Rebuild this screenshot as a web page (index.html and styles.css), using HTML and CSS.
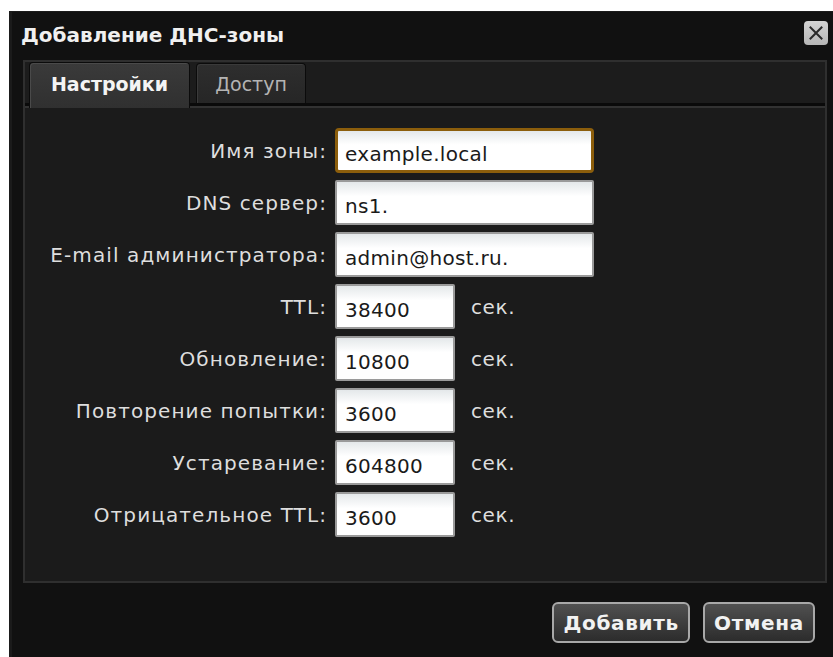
FILE: index.html
```html
<!DOCTYPE html>
<html lang="ru">
<head>
<meta charset="utf-8">
<title>Добавление ДНС-зоны</title>
<link rel="stylesheet" href="styles.css">
</head>
<body>
<div class="dialog">
  <div class="titlebar">
    <span class="title">Добавление ДНС-зоны</span>
    <button class="close" type="button" aria-label="Закрыть">
      <svg width="14" height="14" viewBox="0 0 14 14"><path d="M1.5 1.5 L12.5 12.5 M12.5 1.5 L1.5 12.5" stroke="#2a2a2a" stroke-width="2" fill="none" stroke-linecap="square"/></svg>
    </button>
  </div>
  <div class="panel">
    <div class="tabs">
      <div class="tab active">Настройки</div>
      <div class="tab">Доступ</div>
    </div>
    <div class="content">
      <form class="form">
        <label class="lbl">Имя зоны:</label>
        <div class="field"><input class="inp wide focus" value="example.local"></div>
        <label class="lbl">DNS сервер:</label>
        <div class="field"><input class="inp wide" value="ns1."></div>
        <label class="lbl">E-mail администратора:</label>
        <div class="field"><input class="inp wide" value="admin@host.ru."></div>
        <label class="lbl">TTL:</label>
        <div class="field"><input class="inp short" value="38400"><span class="unit">сек.</span></div>
        <label class="lbl">Обновление:</label>
        <div class="field"><input class="inp short" value="10800"><span class="unit">сек.</span></div>
        <label class="lbl">Повторение попытки:</label>
        <div class="field"><input class="inp short" value="3600"><span class="unit">сек.</span></div>
        <label class="lbl">Устаревание:</label>
        <div class="field"><input class="inp short" value="604800"><span class="unit">сек.</span></div>
        <label class="lbl">Отрицательное TTL:</label>
        <div class="field"><input class="inp short" value="3600"><span class="unit">сек.</span></div>
      </form>
    </div>
  </div>
  <div class="footer">
    <button class="btn" type="button">Добавить</button>
    <button class="btn" type="button">Отмена</button>
  </div>
</div>
</body>
</html>
```
FILE: styles.css
```css
html, body {
  margin: 0;
  padding: 0;
  background: #ffffff;
}

body {
  font-family: "DejaVu Sans", sans-serif;
  overflow: hidden;
}

.dialog {
  box-sizing: border-box;
  margin: 11px 0 0 9px;
  width: 824px;
  height: 646px;
  background: #111111;
  border-left: 3px solid #1b1b1b;
  border-top: 1px solid #1b1b1b;
  display: flex;
  flex-direction: column;
}

.titlebar {
  height: 48px;
  display: flex;
  align-items: flex-start;
  justify-content: space-between;
  padding: 0 5px 0 9px;
  box-sizing: border-box;
}

.title {
  color: #f0f0f0;
  font-weight: bold;
  font-size: 20px;
  line-height: 24px;
  margin-top: 11px;
}

.close {
  margin-top: 9px;
  width: 24px;
  height: 24px;
  padding: 0;
  border: none;
  border-radius: 4px;
  background: linear-gradient(#d4d4d4, #b6b6b6);
  display: flex;
  align-items: center;
  justify-content: center;
}

.panel {
  margin: 0 6px 0 11px;
  height: 523px;
  box-sizing: border-box;
  border: 2px solid #2f2f2f;
  background: #1b1b1b;
  display: flex;
  flex-direction: column;
}

.tabs {
  height: 46px;
  box-sizing: border-box;
  background: #1c1c1c;
  border-bottom: 2px solid #323232;
  box-shadow: inset 0 -3px 0 #0a0a0a;
  display: flex;
  align-items: flex-end;
  gap: 6px;
  padding: 0 0 0 4px;
  margin-bottom: -2px;
}

.tab {
  box-sizing: border-box;
  height: 40px;
  margin-bottom: 3px;
  display: flex;
  align-items: center;
  justify-content: center;
  font-size: 19px;
  color: #b4b4b4;
  background: linear-gradient(#2e2e2e, #262626);
  border: 1px solid #0b0b0b;
  border-bottom: none;
  border-radius: 4px 4px 0 0;
  box-shadow: inset 1px 1px 0 #3a3a3a;
  width: 110px;
}

.tab.active {
  height: 46px;
  margin-bottom: -2px;
  padding-bottom: 4px;
  width: 161px;
  color: #f4f4f4;
  font-weight: bold;
  font-size: 19px;
  background: linear-gradient(#3a3a3a, #303030);
  box-shadow: inset 1px 1px 0 #4a4a4a;
}

.content {
  flex: 1;
  padding-top: 22px;
}

.form {
  display: grid;
  grid-template-columns: 302px 1fr;
  column-gap: 8px;
  row-gap: 7px;
  margin: 0;
}

.lbl {
  justify-self: end;
  align-self: center;
  color: #dedede;
  font-size: 20px;
  letter-spacing: 1.1px;
  white-space: nowrap;
}

.field {
  display: flex;
  align-items: center;
  gap: 16px;
}

.inp {
  box-sizing: border-box;
  height: 45px;
  border: 2px solid #9a9a9a;
  border-radius: 2px;
  background: linear-gradient(#e4e8ea, #ffffff 35%);
  font-family: "DejaVu Sans", sans-serif;
  font-size: 20px;
  letter-spacing: 0.3px;
  color: #1a1a1a;
  padding: 6px 8px 0 8px;
  outline: none;
}

.inp.wide {
  width: 259px;
}

.inp.short {
  width: 120px;
}

.inp.focus {
  border: 3px solid #8c5e0c;
  border-radius: 4px;
  padding-left: 7px;
}

.unit {
  color: #dedede;
  font-size: 20px;
  letter-spacing: 0.6px;
}

.footer {
  flex: 1;
  display: flex;
  justify-content: flex-end;
  align-items: flex-start;
  gap: 13px;
  padding: 19px 18px 0 0;
}

.btn {
  height: 41px;
  padding: 0 9px;
  border: 2px solid #a8a8a8;
  border-radius: 6px;
  background: linear-gradient(#505050, #2c2c2c);
  color: #f2f2f2;
  font-family: "DejaVu Sans", sans-serif;
  font-weight: bold;
  font-size: 20px;
  letter-spacing: 0.7px;
}
```
